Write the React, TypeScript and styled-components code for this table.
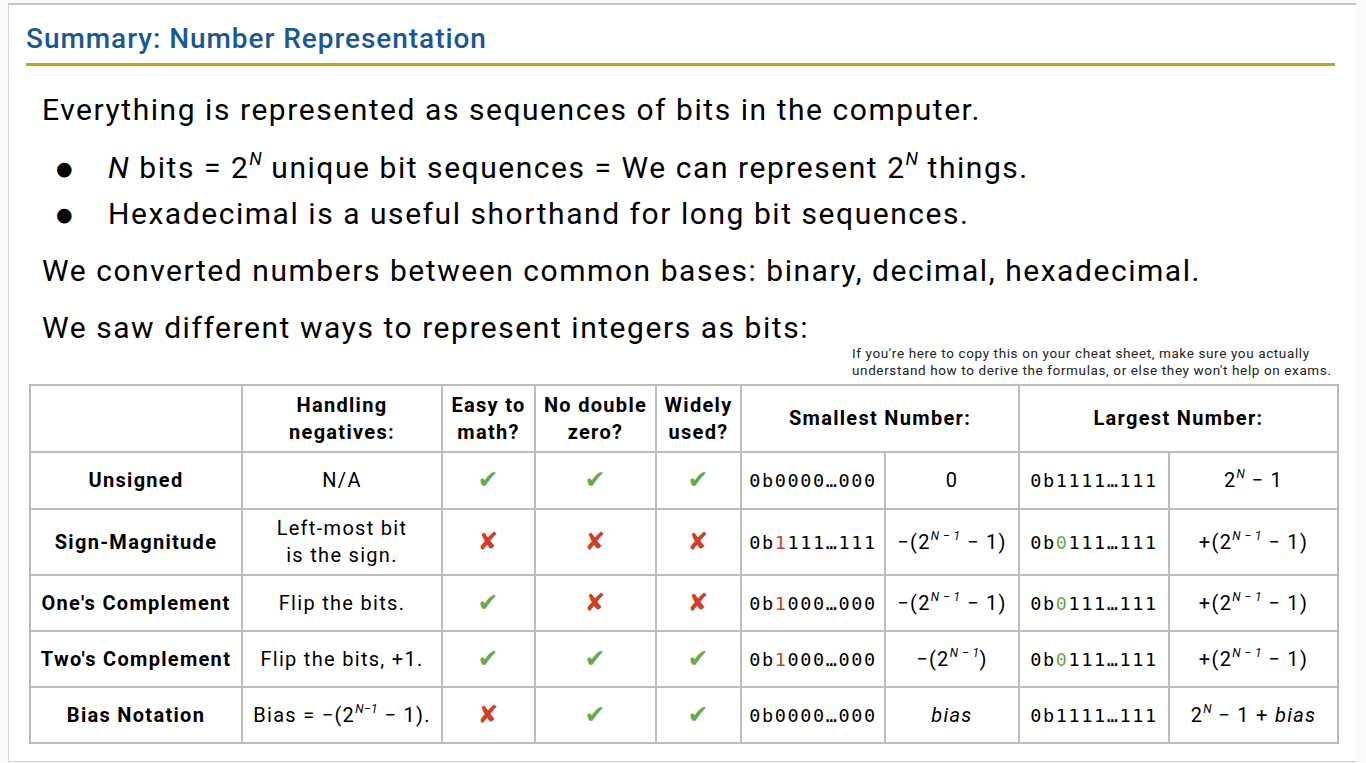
import React from "react";
import styled, { createGlobalStyle } from "styled-components";

const Global = createGlobalStyle`
  html, body { margin: 0; padding: 0; background: #f8f9fa; }
  body { font-family: Roboto, "Liberation Sans", sans-serif; color: #000; }
`;

const Slide = styled.div`
  margin: 3px 0 0 8px;
  width: 1348px;
  height: 759px;
  box-sizing: border-box;
  background: #fff;
  border-top: 2px solid #c3c3c3;
  border-left: 1px solid #d8d8d8;
  border-bottom: 1px solid #cfcfcf;
`;

const Title = styled.h1`
  margin: 0 21px 0 17px;
  padding: 17px 0 7px;
  font-size: 28px;
  line-height: 34px;
  font-weight: 500;
  letter-spacing: 0.95px;
  color: #1a5894;
  border-bottom: 3px solid #c99d1c;
`;

const Intro = styled.div`
  padding: 26px 0 0 33px;
  letter-spacing: 1.55px;
`;

const Para = styled.p<{ $gap?: number }>`
  margin: ${(p) => p.$gap ?? 0}px 0 0;
  font-size: 30px;
  line-height: 36px;
`;

const Bullets = styled.ul`
  margin: 22px 0 0;
  padding: 0;
  list-style: none;
  display: flex;
  flex-direction: column;
  gap: 10px;
`;

const Item = styled.li`
  display: flex;
  font-size: 30px;
  line-height: 36px;
`;

const Marker = styled.span`
  width: 66px;
  padding-left: 14px;
  box-sizing: border-box;
  font-size: 19px;
  font-family: "DejaVu Sans", sans-serif;
`;

const Sup = styled.sup`
  font-size: 0.6em;
  line-height: 0;
  vertical-align: 0.75em;
  font-style: italic;
  letter-spacing: 0.5px;
`;

const Ital = styled.i`
  font-style: italic;
`;

const Note = styled.p`
  margin: -1px 0 0 843px;
  font-size: 13.5px;
  line-height: 17px;
  letter-spacing: 0.62px;
  color: #222;
`;

const Table = styled.table`
  margin: 5px 0 0 20px;
  width: 1308px;
  border-collapse: collapse;
  table-layout: fixed;
  letter-spacing: 1.3px;
`;

const HeadRow = styled.tr`
  height: 67px;
`;

const Row = styled.tr<{ $h: number }>`
  height: ${(p) => p.$h}px;
`;

const Th = styled.th`
  border: 2px solid #bcbcbc;
  font-size: 20px;
  line-height: 27px;
  font-weight: 700;
  text-align: center;
  padding: 0;
  white-space: nowrap;
`;

const Label = styled.td`
  border: 2px solid #bcbcbc;
  font-size: 20px;
  line-height: 27px;
  font-weight: 700;
  text-align: center;
  padding: 0;
  white-space: nowrap;
`;

const Td = styled.td`
  border: 2px solid #bcbcbc;
  font-size: 20px;
  line-height: 27px;
  text-align: center;
  padding: 0;
  white-space: nowrap;
`;

const Mono = styled.td`
  border: 2px solid #bcbcbc;
  font-family: "DejaVu Sans Mono", "Liberation Mono", monospace;
  font-size: 18.5px;
  letter-spacing: 1.6px;
  text-align: center;
  padding: 0;
  white-space: nowrap;
`;

const Mark = styled.span<{ $ok: boolean }>`
  font-family: "DejaVu Sans", sans-serif;
  font-size: 25px;
  color: ${(p) => (p.$ok ? "#6aa84f" : "#cc4125")};
`;

const Bit = styled.span<{ $c: "red" | "green" }>`
  color: ${(p) => (p.$c === "red" ? "#cc4125" : "#6aa84f")};
`;

const Yes = () => <Mark $ok>✔</Mark>;
const No = () => <Mark $ok={false}>✘</Mark>;

const NMinus1 = () => <Sup>N − 1</Sup>;

type RowData = {
  h: number;
  label: string;
  neg: React.ReactNode;
  easy: boolean;
  dbl: boolean;
  used: boolean;
  minBits: React.ReactNode;
  minVal: React.ReactNode;
  maxBits: React.ReactNode;
  maxVal: React.ReactNode;
};

const rows: RowData[] = [
  {
    h: 57,
    label: "Unsigned",
    neg: "N/A",
    easy: true,
    dbl: true,
    used: true,
    minBits: "0b0000…000",
    minVal: "0",
    maxBits: "0b1111…111",
    maxVal: (
      <>
        2<Sup>N</Sup> − 1
      </>
    ),
  },
  {
    h: 66,
    label: "Sign-Magnitude",
    neg: (
      <>
        Left-most bit
        <br />
        is the sign.
      </>
    ),
    easy: false,
    dbl: false,
    used: false,
    minBits: (
      <>
        0b<Bit $c="red">1</Bit>111…111
      </>
    ),
    minVal: (
      <>
        −(2<NMinus1 /> − 1)
      </>
    ),
    maxBits: (
      <>
        0b<Bit $c="green">0</Bit>111…111
      </>
    ),
    maxVal: (
      <>
        +(2<NMinus1 /> − 1)
      </>
    ),
  },
  {
    h: 56,
    label: "One's Complement",
    neg: "Flip the bits.",
    easy: true,
    dbl: false,
    used: false,
    minBits: (
      <>
        0b<Bit $c="red">1</Bit>000…000
      </>
    ),
    minVal: (
      <>
        −(2<NMinus1 /> − 1)
      </>
    ),
    maxBits: (
      <>
        0b<Bit $c="green">0</Bit>111…111
      </>
    ),
    maxVal: (
      <>
        +(2<NMinus1 /> − 1)
      </>
    ),
  },
  {
    h: 56,
    label: "Two's Complement",
    neg: "Flip the bits, +1.",
    easy: true,
    dbl: true,
    used: true,
    minBits: (
      <>
        0b<Bit $c="red">1</Bit>000…000
      </>
    ),
    minVal: (
      <>
        −(2<NMinus1 />)
      </>
    ),
    maxBits: (
      <>
        0b<Bit $c="green">0</Bit>111…111
      </>
    ),
    maxVal: (
      <>
        +(2<NMinus1 /> − 1)
      </>
    ),
  },
  {
    h: 56,
    label: "Bias Notation",
    neg: (
      <>
        Bias = −(2<Sup>N−1</Sup> − 1).
      </>
    ),
    easy: false,
    dbl: true,
    used: true,
    minBits: "0b0000…000",
    minVal: <Ital>bias</Ital>,
    maxBits: "0b1111…111",
    maxVal: (
      <>
        2<Sup>N</Sup> − 1 + <Ital>bias</Ital>
      </>
    ),
  },
];

const widths = [212, 200, 93, 121, 85, 144, 134, 150, 169];

export default function App() {
  return (
    <>
      <Global />
      <Slide>
        <Title>Summary: Number Representation</Title>
        <Intro>
          <Para>Everything is represented as sequences of bits in the computer.</Para>
          <Bullets>
            <Item>
              <Marker>●</Marker>
              <span>
                <Ital>N</Ital> bits = 2<Sup>N</Sup> unique bit sequences = We can represent 2
                <Sup>N</Sup> things.
              </span>
            </Item>
            <Item>
              <Marker>●</Marker>
              <span>Hexadecimal is a useful shorthand for long bit sequences.</span>
            </Item>
          </Bullets>
          <Para $gap={21}>We converted numbers between common bases: binary, decimal, hexadecimal.</Para>
          <Para $gap={21}>We saw different ways to represent integers as bits:</Para>
        </Intro>
        <Note>
          If you're here to copy this on your cheat sheet, make sure you actually
          <br />
          understand how to derive the formulas, or else they won't help on exams.
        </Note>
        <Table>
          <colgroup>
            {widths.map((w, i) => (
              <col key={i} style={{ width: w }} />
            ))}
          </colgroup>
          <thead>
            <HeadRow>
              <Th />
              <Th>
                Handling
                <br />
                negatives:
              </Th>
              <Th>
                Easy to
                <br />
                math?
              </Th>
              <Th>
                No double
                <br />
                zero?
              </Th>
              <Th>
                Widely
                <br />
                used?
              </Th>
              <Th colSpan={2}>Smallest Number:</Th>
              <Th colSpan={2}>Largest Number:</Th>
            </HeadRow>
          </thead>
          <tbody>
            {rows.map((r) => (
              <Row key={r.label} $h={r.h}>
                <Label>{r.label}</Label>
                <Td>{r.neg}</Td>
                <Td>{r.easy ? <Yes /> : <No />}</Td>
                <Td>{r.dbl ? <Yes /> : <No />}</Td>
                <Td>{r.used ? <Yes /> : <No />}</Td>
                <Mono>{r.minBits}</Mono>
                <Td>{r.minVal}</Td>
                <Mono>{r.maxBits}</Mono>
                <Td>{r.maxVal}</Td>
              </Row>
            ))}
          </tbody>
        </Table>
      </Slide>
    </>
  );
}
